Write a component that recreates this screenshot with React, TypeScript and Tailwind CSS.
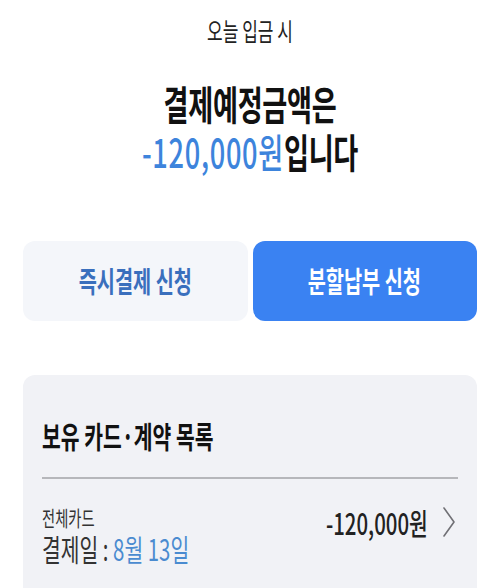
const font = { fontFamily: '"Noto Sans CJK KR", "Noto Sans", sans-serif' };

const Squish = ({
  children,
  className = "",
}: {
  children: React.ReactNode;
  className?: string;
}) => <div className={`scale-x-[0.68] ${className}`}>{children}</div>;

export default function App() {
  return (
    <div className="w-[500px] h-[588px] bg-white overflow-hidden" style={font}>
      <div className="pt-[15px] h-[46px]">
        <Squish className="origin-center text-center text-[25px] leading-[30px] text-[#222]">
          오늘 입금 시
        </Squish>
      </div>

      <div className="mt-[33px]">
        <Squish className="origin-center text-center text-[40px] leading-[48px] font-bold text-[#111] tracking-[-0.5px]">
          <div>결제예정금액은</div>
          <div>
            <span className="text-[#3d84dc] font-medium tracking-[1px]">-120,000원</span>
            입니다
          </div>
        </Squish>
      </div>

      <div className="mt-[66px] px-[23px] flex gap-[5px]">
        <button className="flex-1 h-[80px] rounded-[12px] bg-[#f4f6fa] flex items-center justify-center">
          <Squish className="origin-center text-[29px] font-bold text-[#3a6fbd]">
            즉시결제 신청
          </Squish>
        </button>
        <button className="flex-1 h-[80px] rounded-[12px] bg-[#3a82f2] flex items-center justify-center">
          <Squish className="origin-center text-[29px] font-bold text-white">
            분할납부 신청
          </Squish>
        </button>
      </div>

      <div className="mt-[54px] mx-[23px] h-[260px] rounded-[12px] bg-[#f1f2f6] px-[19px] pt-[40px]">
        <Squish className="origin-left text-[30px] leading-[40px] font-bold text-[#111] whitespace-nowrap">
          보유 카드·계약 목록
        </Squish>
        <div className="mt-[22px] h-[2px] bg-[#b6b7bb]" />
        <div className="mt-[26px] flex items-start justify-between">
          <div className="flex flex-col gap-[2px]">
            <Squish className="origin-left text-[21px] leading-[24px] text-[#333] whitespace-nowrap">
              전체카드
            </Squish>
            <Squish className="origin-left text-[30px] leading-[34px] text-[#333] whitespace-nowrap">
              결제일 : <span className="text-[#4a8bd0]">8월 13일</span>
            </Squish>
          </div>
          <div className="flex items-center gap-[14px] pr-[2px]">
            <Squish className="origin-right text-[30px] leading-[34px] font-medium text-[#222] whitespace-nowrap">
              -120,000원
            </Squish>
            <svg width="14" height="32" viewBox="0 0 14 32" fill="none">
              <path d="M2 2 L12 16 L2 30" stroke="#707075" strokeWidth="1.6" strokeLinecap="round" strokeLinejoin="round" />
            </svg>
          </div>
        </div>
      </div>
    </div>
  );
}
